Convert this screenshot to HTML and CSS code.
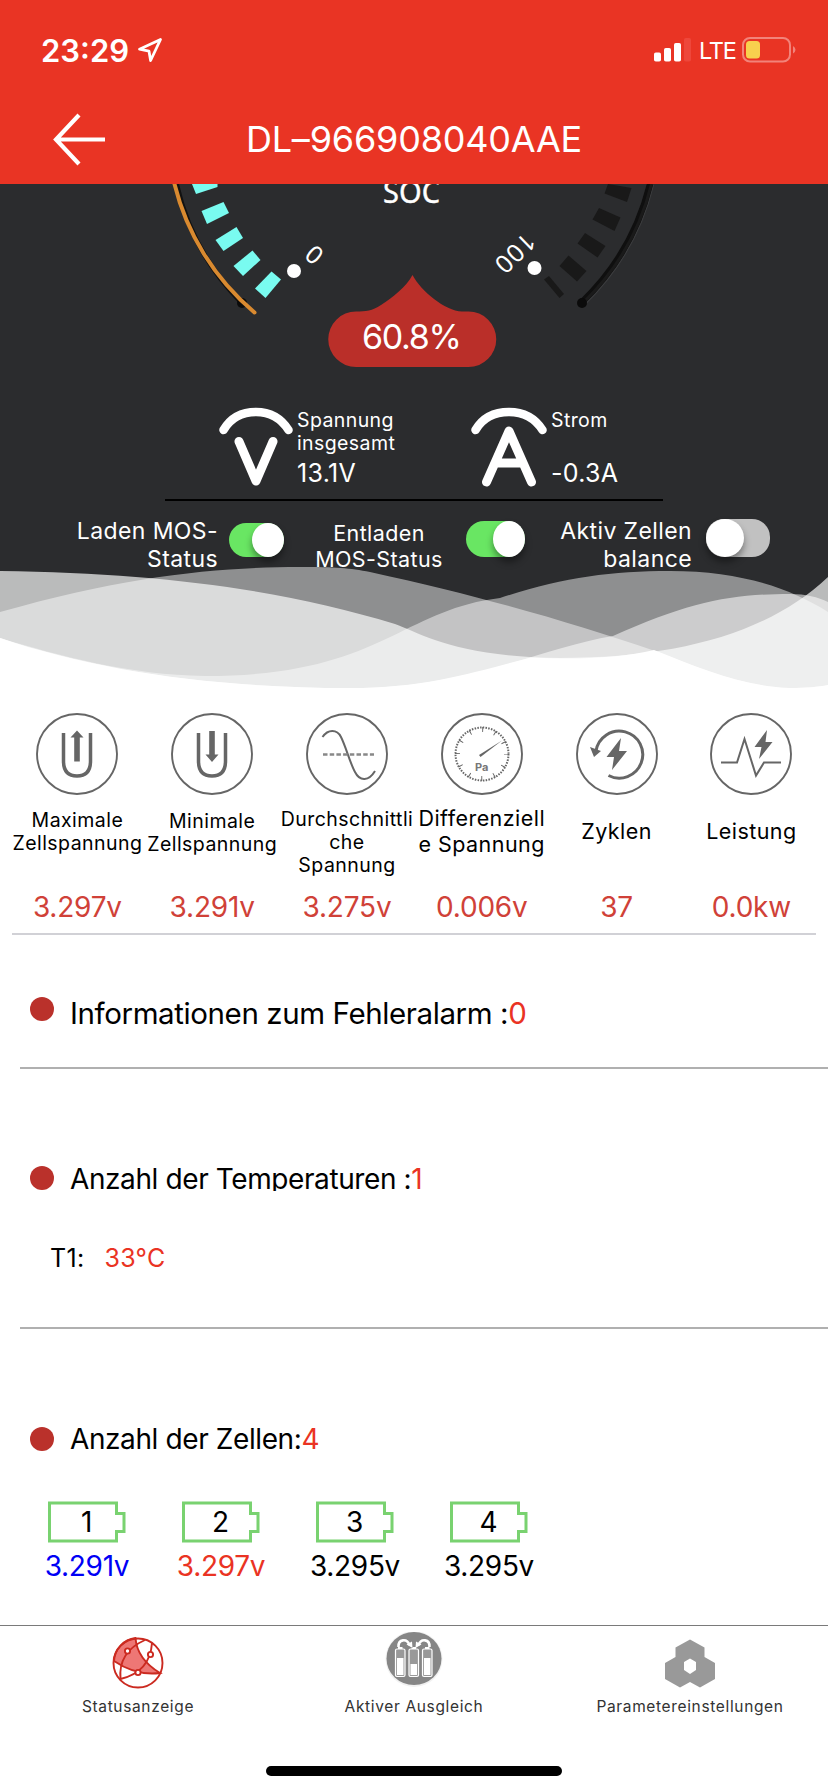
FILE: index.html
```html
<!DOCTYPE html>
<html lang="de">
<head>
    <meta charset="utf-8">
    <title>DL-966908040AAE</title>
    <link rel="stylesheet" href="styles.css">
</head>
<body>
    <header class="header">
        <div class="status-bar">
            <span class="clock">23:29</span>
            <svg class="location" width="26" height="26" viewBox="0 0 26 26"><path d="M23.5 2.5 L2.5 12.2 L12 14.2 L13.6 23.5 Z" fill="none" stroke="#fff" stroke-width="2.8" stroke-linejoin="round"/></svg>
            <svg class="signal" width="38" height="24" viewBox="0 0 38 24">
                <rect x="0" y="14.5" width="7" height="9" rx="1.8" fill="#fff"/>
                <rect x="10" y="10" width="7" height="13.5" rx="1.8" fill="#fff"/>
                <rect x="20" y="5" width="7" height="18.5" rx="1.8" fill="#fff"/>
                <rect x="30" y="0" width="7" height="23.5" rx="1.8" fill="#ee473b"/>
            </svg>
            <span class="network">LTE</span>
            <svg class="battery" width="56" height="26" viewBox="0 0 56 26">
                <rect x="1" y="1" width="47" height="23.5" rx="7" fill="none" stroke="#f2837a" stroke-width="2"/>
                <path d="M51 9 Q53.5 10.5 53.5 12.8 Q53.5 15 51 16.5 Z" fill="#f2837a"/>
                <rect x="4" y="4" width="14" height="17.5" rx="3.5" fill="#f8d04e"/>
            </svg>
        </div>
        <div class="nav-bar">
            <svg class="back" width="56" height="54" viewBox="0 0 56 54"><path d="M28 3 L5 27.5 L28 52 M5 27.5 H54" fill="none" stroke="#fff" stroke-width="4.2"/></svg>
            <h1>DL–966908040AAE</h1>
        </div>
    </header>

    <section class="hero">
        <svg class="gauge" width="828" height="206" viewBox="0 184 828 206">
            <!-- Skala links / rechts -->
            <path d="M176.5 184 A245 245 0 0 0 241 302" fill="none" stroke="#111" stroke-width="5"/>
            <circle cx="242" cy="303" r="5" fill="#0b0b0b"/>
            <path d="M650.5 184 A245.5 245.5 0 0 1 583 302" fill="none" stroke="#3b3c3e" stroke-width="7.5"/>
            <path d="M650 184 A245.5 245.5 0 0 1 582 302" fill="none" stroke="#0f0f0f" stroke-width="6.5"/>
            <path d="M651.5 184 A246.5 246.5 0 0 1 584 302" fill="none" stroke="#1a1a1a" stroke-width="3"/>
            <circle cx="582" cy="303" r="5" fill="#0b0b0b"/>
            <path d="M174 182 A245 245 0 0 0 254.5 312.5" fill="none" stroke="#d98a30" stroke-width="4" stroke-linecap="round"/>
            <g fill="#79fbf0">
                <path d="M192 184 H217.5 V187 L196 194 Z"/>
                <path d="M201.5 211 L223.5 202 L229 213 L207 224 Z"/>
                <path d="M215.5 240 L236.5 227 L243 238 L223.5 251 Z"/>
                <path d="M233.5 266 L252.5 250.5 L260.5 260 L243 276 Z"/>
                <path d="M255 288.5 L271.5 271.5 L281 279.5 L265.5 298 Z"/>
            </g>
            <g fill="#191919">
                <path d="M608 184 L631.5 188 L627 202 L604.5 193.5 Z"/>
                <path d="M599 208 L620.5 217.5 L614.5 231 L592.5 219.5 Z"/>
                <path d="M585 233 L605.5 246 L597.5 257.5 L577.5 243.5 Z"/>
                <path d="M568.5 255.5 L586.5 271 L577 281.5 L559.5 266 Z"/>
                <path d="M549 276 L564 294 L559.5 298 L544 279.5 Z"/>
            </g>
            <circle cx="294" cy="271" r="7" fill="#fff"/>
            <circle cx="534.5" cy="268" r="7" fill="#fff"/>
            <text class="scale" x="313.500" y="255.5" text-anchor="middle" dominant-baseline="central" transform="rotate(-139 313.5 255.5)">0</text>
            <text class="scale" x="516" y="254" text-anchor="middle" dominant-baseline="central" transform="rotate(136 516 254)" textLength="45">100</text>
            <text class="soc" x="383" y="202.5" textLength="57" lengthAdjust="spacingAndGlyphs">SOC</text>
            <path d="M412.5 275 C421 291 445 311 462 311.5 H468.500 A27.750 27.750 0 0 1 468.500 367 H356 A27.750 27.750 0 0 1 356 311.5 C366 311.5 372 311 381 305 C393 297 406 287 412.5 275 Z" fill="#ba2f29"/>
            <text class="percent" x="362" y="348.5" textLength="100">60.8%</text>
        </svg>

        <div class="readings">
            <div class="reading">
                <svg width="74" height="80" viewBox="0 0 74 80" fill="none" stroke="#fff" stroke-linecap="round" stroke-linejoin="round"><path d="M4.5 23 Q15 5 37 5 Q58 5 69.5 23" stroke-width="8.5"/><path d="M20 34.5 L37 74 L54 34.5" stroke-width="9"/></svg>
                <div class="reading-text">
                    <span>Spannung<br>insgesamt</span>
                    <b>13.1V</b>
                </div>
            </div>
            <div class="reading">
                <svg width="76" height="80" viewBox="0 0 76 80" fill="none" stroke="#fff" stroke-linecap="round" stroke-linejoin="round"><path d="M4.5 23 Q15 5 38 5 Q60 5 71.5 23" stroke-width="8.5"/><path d="M15.5 75 L38 24 L60.5 75 M25 56 H51" stroke-width="9"/></svg>
                <div class="reading-text">
                    <span>Strom</span>
                    <b>-0.3A</b>
                </div>
            </div>
        </div>

        <div class="switches">
            <span class="switch-label charge">Laden MOS-<br>Status</span>
            <i class="toggle on t1"></i>
            <span class="switch-label discharge">Entladen<br>MOS-Status</span>
            <i class="toggle on t2"></i>
            <span class="switch-label balance">Aktiv Zellen<br>balance</span>
            <i class="toggle t3"></i>
        </div>

        <svg class="waves" width="828" height="142" viewBox="0 558 828 142">
            <g fill="#fff">
                <path fill-opacity=".68" d="M0 571 C160 573 285 590 395 624 C420 633 455 657 560 658 C680 658 770 632 828 577 V700 H0 Z"/>
                <path fill-opacity=".47" d="M0 612 C130 575 220 567 300 567 C335 567 350 568 370 572 C480 596 570 622 655 651 C700 668 740 686 790 688 C806 688 818 687 828 685 V700 H0 Z"/>
                <path fill-opacity=".47" d="M0 638 C60 656 130 675 205 676 C380 676 400 610 500 598 C560 578 610 571 670 571 C740 571 790 588 828 612 V700 H0 Z"/>
                <path fill-opacity=".55" d="M0 638 C100 672 220 688 350 688 C470 688 540 648 613 636 C690 602 730 594 790 594 C806 594 818 597 828 602 V700 H0 Z"/>
                <path d="M0 638 C100 672 220 688 350 688 C430 688 480 670 531 657.5 C575 660 622 658 654 650 C700 668 740 686 790 688 C806 688 818 687 828 685 V700 H0 Z"/>
            </g>
        </svg>
    </section>

    <section class="metrics">
        <div class="metric">
            <svg class="metric-icon" viewBox="0 0 82 82"><circle cx="41" cy="41" r="40"/><path d="M27.5 20 V48 Q27.5 63 41 63 Q54.5 63 54.5 48 V20" stroke-width="3.5"/><path class="solid" d="M41 17.5 L47.5 24.5 H43.8 V48.5 H38.2 V24.5 H34.5 Z"/></svg>
            <span class="metric-name">Maximale<br>Zellspannung</span>
            <span class="metric-value">3.297v</span>
        </div>
        <div class="metric">
            <svg class="metric-icon" viewBox="0 0 82 82"><circle cx="41" cy="41" r="40"/><path d="M27.5 20 V48 Q27.5 63 41 63 Q54.5 63 54.5 48 V20" stroke-width="3.5"/><path class="solid" d="M41 49 L47.5 41.5 H43.8 V18 H38.2 V41.5 H34.5 Z"/></svg>
            <span class="metric-name lower">Minimale<br>Zellspannung</span>
            <span class="metric-value">3.291v</span>
        </div>
        <div class="metric">
            <svg class="metric-icon" viewBox="0 0 82 82"><circle cx="41" cy="41" r="40"/><path d="M16.5 24 C22 16 31 16 35 24 C40 34 44 50 49 59 C54 69 63 68 69 58" stroke-width="2"/><path d="M17 41.5 H68" stroke="#888" stroke-width="2.5" stroke-dasharray="4.5 2.2"/></svg>
            <span class="metric-name upper">Durchschnittli<br>che<br>Spannung</span>
            <span class="metric-value">3.275v</span>
        </div>
        <div class="metric">
            <svg class="metric-icon" viewBox="0 0 82 82"><circle cx="41" cy="41" r="40"/><circle cx="41" cy="41" r="26.5" stroke-width="2" stroke-dasharray="1.5 1.275"/><circle cx="41" cy="41" r="24.5" stroke-width="5" stroke-dasharray="1 11.828" stroke-dashoffset=".5"/><path class="solid" d="M38 42 L61 27.5 L39.5 44 Z"/><text x="34" y="58" font-size="11" font-weight="700">Pa</text></svg>
            <span class="metric-name wide">Differenziell<br>e Spannung</span>
            <span class="metric-value">0.006v</span>
        </div>
        <div class="metric">
            <svg class="metric-icon" viewBox="0 0 82 82"><circle cx="41" cy="41" r="40"/><path d="M20 38 A23.5 23.5 0 1 1 32.5 62.5" stroke-width="3"/><path class="solid" d="M14 34 L25 38 L18 44 Z M45 25 L30.5 44 H38 L36 57 L51 38 H43 Z"/></svg>
            <span class="metric-name single">Zyklen</span>
            <span class="metric-value">37</span>
        </div>
        <div class="metric">
            <svg class="metric-icon" viewBox="0 0 82 82"><circle cx="41" cy="41" r="40"/><path d="M11 49.5 H27 L34.5 26 L46 62.5 L54 49.5 H71" stroke-width="2"/><path class="solid" d="M57 17 L44.5 34 H51.5 L49 46 L62.5 29 H55.5 Z"/></svg>
            <span class="metric-name single">Leistung</span>
            <span class="metric-value">0.0kw</span>
        </div>
    </section>

    <section class="block alarm">
        <h2><i class="dot"></i><span>Informationen zum Fehleralarm :<em>0</em></span></h2>
    </section>

    <section class="block temps">
        <h2><i class="dot"></i><span class="clipped">Anzahl der Temperaturen :<em>1</em></span></h2>
        <p class="temp"><span>T1:</span><em>33°C</em></p>
    </section>

    <section class="cells">
        <h2><i class="dot"></i><span>Anzahl der Zellen:<em>4</em></span></h2>
        <div class="cell-list">
            <div class="cell"><svg width="78" height="42" viewBox="0 0 78 42"><path d="M1.5 2 H68.5 V12.5 H76 V30.5 H68.5 V40 H1.5 Z"/><text x="38.5" y="31">1</text></svg><span class="min">3.291v</span></div>
            <div class="cell"><svg width="78" height="42" viewBox="0 0 78 42"><path d="M1.5 2 H68.5 V12.5 H76 V30.5 H68.5 V40 H1.5 Z"/><text x="38.5" y="31">2</text></svg><span class="max">3.297v</span></div>
            <div class="cell"><svg width="78" height="42" viewBox="0 0 78 42"><path d="M1.5 2 H68.5 V12.5 H76 V30.5 H68.5 V40 H1.5 Z"/><text x="38.5" y="31">3</text></svg><span>3.295v</span></div>
            <div class="cell"><svg width="78" height="42" viewBox="0 0 78 42"><path d="M1.5 2 H68.5 V12.5 H76 V30.5 H68.5 V40 H1.5 Z"/><text x="38.5" y="31">4</text></svg><span>3.295v</span></div>
        </div>
    </section>

    <nav class="tab-bar">
        <a class="tab">
            <svg width="60" height="60" viewBox="0 0 60 60" fill="none" stroke="#cb2a20" stroke-width="1.9">
                <path d="M27.5 6 Q29 27 52 41 Q28 44 6 29 A24.5 24.5 0 0 1 27.5 6 Z" fill="#ee7775"/>
                <circle cx="30" cy="31" r="24.5"/>
                <path d="M37 8 Q10 20 12.5 47 Q42 40 44 11"/>
                <g fill="#fff"><circle cx="19.5" cy="19" r="2.6"/><circle cx="42.5" cy="22.5" r="2.6"/><circle cx="30" cy="40.5" r="2.6"/></g>
            </svg>
            <span>Statusanzeige</span>
        </a>
        <a class="tab">
            <svg width="60" height="60" viewBox="0 0 60 60">
                <ellipse cx="30" cy="27" rx="28.5" ry="28" fill="#f1f1f1"/>
                <ellipse cx="30" cy="26.5" rx="27.5" ry="26.5" fill="#868686"/>
                <g fill="#999" stroke="#fff" stroke-width="1.2">
                    <rect x="11.5" y="17" width="9.5" height="27.5" rx="1.5"/><rect x="25" y="17" width="9.5" height="27.5" rx="1.5"/><rect x="38.5" y="17" width="9.5" height="27.5" rx="1.5"/>
                </g>
                <path d="M13 26 H19.5 V43 H13 Z M26.5 32 H33 V43 H26.5 Z M40 26 H46.5 V43 H40 Z M14 15 H18.5 V17 H14 Z M27.5 15 H32 V17 H27.5 Z M41 15 H45.5 V17 H41 Z M22.5 12.5 L28.5 16 L28 9.5 Z M37.5 12.5 L31.5 16 L32 9.5 Z" fill="#fff"/>
                <path d="M14.5 15 C14 7 23 6 25.5 13 M45.5 15 C46 7 37 6 34.5 13" fill="none" stroke="#fff" stroke-width="2.6"/>
            </svg>
            <span>Aktiver Ausgleich</span>
        </a>
        <a class="tab">
            <svg width="60" height="60" viewBox="0 0 60 60"><path fill="#999" fill-rule="evenodd" d="M30 7.5 L44.5 15.5 V25 L55 31 V47 L40 55.5 L30 50 L20 55.5 L5 47 V31 L15.5 25 V15.5 Z M30 26.5 L24 30 V38 L30 42 L36 38 V30 Z"/></svg>
            <span>Parametereinstellungen</span>
        </a>
    </nav>
    <div class="home-indicator"></div>
</body>
</html>
```
FILE: styles.css
```css
* {
    box-sizing: border-box;
}
body {
    margin: 0;
    width: 828px;
    height: 1792px;
    overflow: hidden;
    background: #fff;
    color: #000;
    font-family: Inter, "Liberation Sans", sans-serif;
}
h1, h2, p {
    margin: 0;
    font-weight: 400;
}
em, i {
    font-style: normal;
}
svg {
    display: block;
    flex: none;
}

/* Kopfzeile */
.header {
    height: 184px;
    background: #e93424;
    color: #fff;
}
.status-bar {
    display: flex;
    align-items: center;
    height: 98px;
    padding: 2px 30px 0 41px;
}
.clock {
    width: 88px;
    font-size: 31px;
    font-weight: 600;
    white-space: nowrap;
}
.location {
    margin-left: 8px;
}
.signal {
    margin-left: auto;
}
.network {
    width: 50px;
    padding-left: 7px;
    font-size: 23.5px;
    letter-spacing: -1.2px;
}
.nav-bar {
    display: flex;
    align-items: center;
    height: 86px;
    padding: 0 0 5px 51px;
}
.nav-bar h1 {
    width: 614px;
    text-align: center;
    font-size: 36px;
    letter-spacing: -0.2px;
}

/* Dunkler Bereich mit Tacho */
.hero {
    position: relative;
    height: 506px;
    background: #2b2c2e;
    color: #fff;
}
.scale {
    fill: #fff;
    font-family: "Noto Sans", sans-serif;
    font-size: 25px;
}
.soc {
    fill: #fff;
    stroke: #fff;
    stroke-width: 0.4px;
    font-family: "Noto Sans", sans-serif;
    font-size: 30px;
}
.percent {
    fill: #fff;
    font-size: 34px;
}
.readings {
    display: flex;
    gap: 67px;
    width: 498px;
    height: 111px;
    margin-left: 165px;
    padding: 17px 0 0 54px;
    border-bottom: 2px solid #000;
}
.reading {
    display: flex;
    width: 185px;
    gap: 4px;
}
.reading-text {
    display: flex;
    flex-direction: column;
    justify-content: space-between;
    height: 83px;
    padding-top: 2px;
}
.reading-text span {
    font-size: 19.5px;
    line-height: 23px;
    letter-spacing: 0.4px;
}
.reading-text b {
    font-weight: 400;
    font-size: 25px;
    line-height: 33px;
    letter-spacing: 0.3px;
}
.switches {
    position: relative;
    z-index: 1;
    display: flex;
    align-items: flex-start;
    padding-top: 16px;
}
.switch-label {
    font-size: 23px;
    line-height: 28px;
    letter-spacing: 0.4px;
    white-space: nowrap;
}
.charge {
    width: 218px;
    text-align: right;
}
.discharge {
    width: 182px;
    padding: 3px 0 0 8px;
    font-size: 21.5px;
    line-height: 26px;
    text-align: center;
}
.balance {
    width: 167px;
    text-align: right;
}
.toggle {
    display: flex;
    flex: none;
    border-radius: 18px;
    background: #c1c1c1;
}
.toggle.on {
    justify-content: flex-end;
    background: #69e663;
}
.toggle::before {
    content: "";
    width: 38px;
    height: 100%;
    border-radius: 50%;
    background: #fff;
    box-shadow: 0 5px 7px rgba(0, 0, 0, 0.4);
}
.toggle.on::before {
    width: 32px;
}
.t1 {
    width: 55px;
    height: 34px;
    margin: 6px 0 0 11px;
}
.t2 {
    width: 59px;
    height: 36px;
    margin: 4px 0 0;
}
.t3 {
    width: 64px;
    height: 38px;
    margin: 2px 0 0 14px;
}
/* Wellen liegen über dem unteren Rand */
.waves {
    position: absolute;
    left: 0;
    bottom: -10px;
}

/* Messwerte */
.metrics {
    display: flex;
    width: 804px;
    height: 245px;
    margin: 0 12px;
    padding-top: 23px;
    border-bottom: 2px solid #d1d1d6;
}
.metric {
    display: flex;
    flex: none;
    flex-direction: column;
    align-items: center;
    width: 134.8px;
    margin-left: -2px;
    margin-right: 2px;
}
.metric-icon {
    width: 82px;
    height: 82px;
    fill: none;
    stroke: #666;
    stroke-width: 1.9;
}
.metric-icon .solid {
    fill: #666;
    stroke: none;
}
.metric-icon text {
    fill: #777;
    stroke: none;
}
.metric-name {
    height: 84px;
    padding-top: 14px;
    font-size: 19.5px;
    line-height: 23px;
    letter-spacing: 0.45px;
    text-align: center;
    white-space: nowrap;
}
.metric-name.lower {
    padding-top: 15px;
}
.metric-name.upper {
    padding-top: 13px;
}
.metric-name.wide {
    padding-top: 10px;
    font-size: 21.5px;
    line-height: 26px;
    text-align: left;
}
.metric-name.single {
    padding-top: 23px;
    font-size: 21.5px;
    line-height: 26px;
}
.metric-value {
    padding-top: 11px;
    font-size: 28px;
    line-height: 34px;
    letter-spacing: -0.2px;
    color: #d04138;
}

/* Abschnitte */
.block {
    margin-left: 20px;
    padding-left: 10px;
    border-bottom: 2px solid #b0b0b0;
}
h2 {
    display: flex;
    align-items: center;
    font-size: 28px;
    line-height: 34px;
    letter-spacing: -0.4px;
}
h2 em, .temp em {
    color: #ea3323;
}
.dot {
    width: 24px;
    height: 24px;
    margin-right: 16px;
    border-radius: 50%;
    background: #ba312b;
}
.alarm {
    height: 134px;
    padding-top: 61px;
}
.alarm h2 {
    font-size: 29.5px;
}
.alarm .dot {
    margin-top: -8px;
}
.temps {
    height: 260px;
    padding-top: 93px;
}
.temps .dot {
    margin-top: 3px;
}
.clipped {
    height: 29px;
    line-height: 35px;
    overflow: hidden;
}
.temp {
    display: flex;
    gap: 20px;
    padding: 51px 0 0 20px;
    font-size: 25px;
    line-height: 32px;
    letter-spacing: 0.3px;
}
.cells {
    height: 296px;
    padding: 93px 0 0 30px;
}
.cell-list {
    display: flex;
    gap: 34px;
    padding: 45px 0 0 7px;
}
.cell {
    display: flex;
    flex-direction: column;
    align-items: center;
    width: 100px;
    font-size: 28px;
    line-height: 47px;
    letter-spacing: -0.3px;
}
.cell svg path {
    fill: none;
    stroke: #79d270;
    stroke-width: 3;
}
.cell svg text {
    font-size: 28px;
    text-anchor: middle;
}
.min {
    color: #0000f5;
}
.max {
    color: #ea3323;
}

/* Untere Leiste */
.tab-bar {
    display: flex;
    height: 141px;
    border-top: 1px solid #7a7a7a;
    padding-top: 6px;
}
.tab {
    display: flex;
    flex-direction: column;
    align-items: center;
    width: 276px;
    font-size: 15.5px;
    line-height: 20px;
    letter-spacing: 0.65px;
    color: #333;
}
.tab span {
    padding-top: 5px;
}
.home-indicator {
    width: 296px;
    height: 10px;
    margin: 0 auto;
    border-radius: 5px;
    background: #000;
}
```
